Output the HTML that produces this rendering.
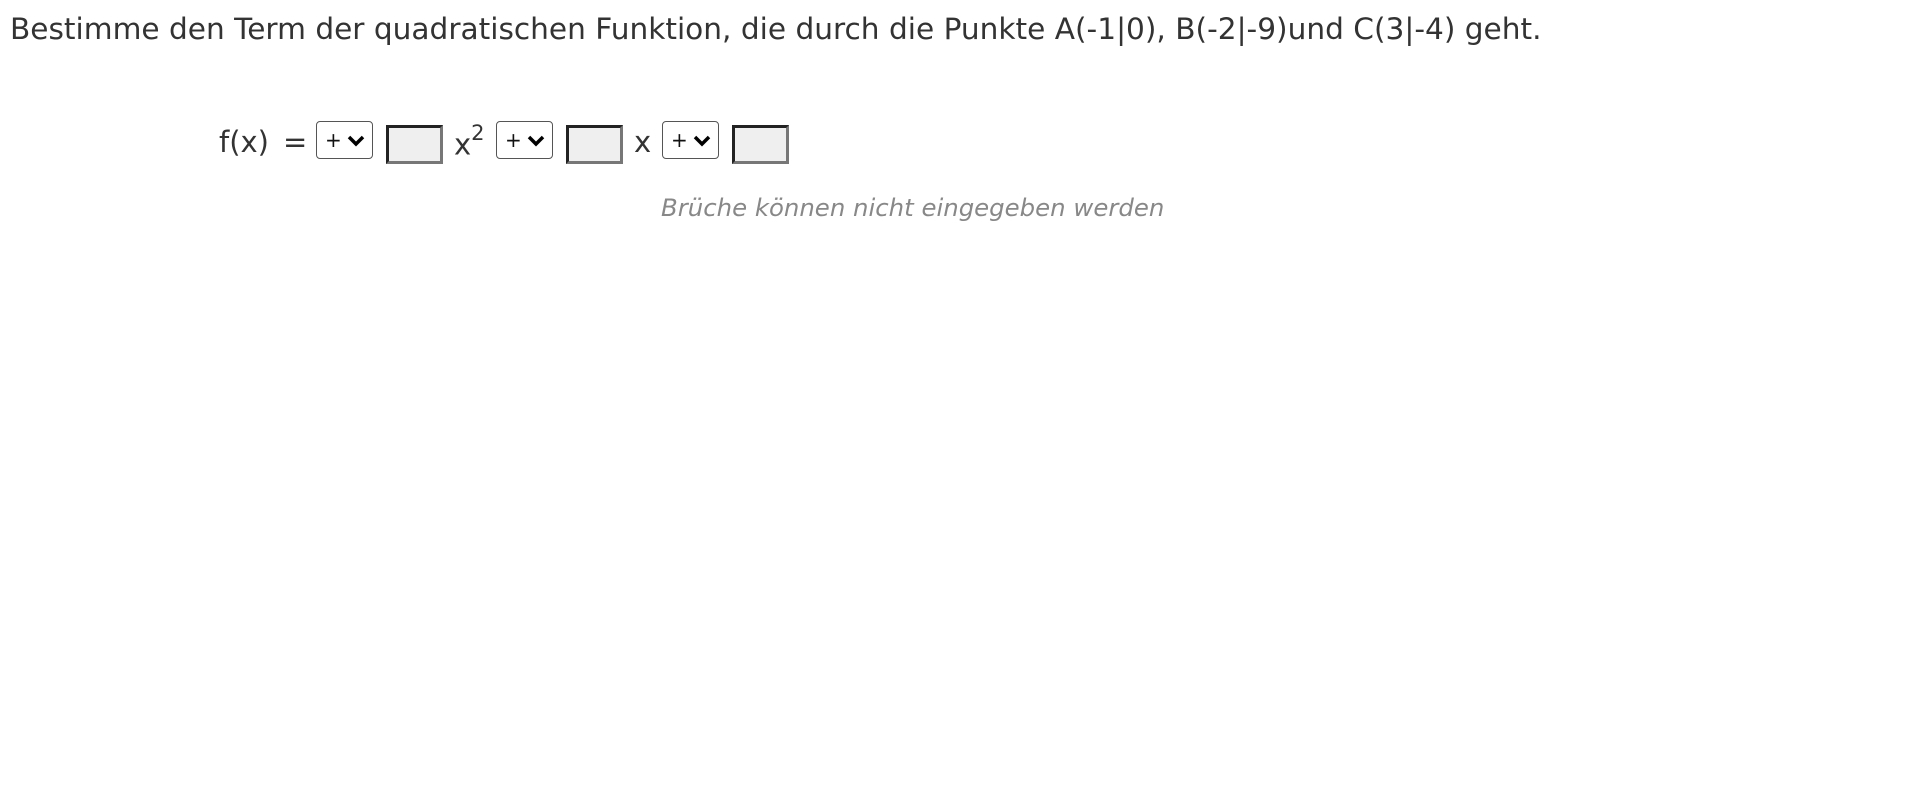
<!DOCTYPE html>
<html><head><meta charset="utf-8"><style>
body{margin:0;background:#fff;width:1920px;height:810px;overflow:hidden;font-family:"DejaVu Sans","Liberation Sans",sans-serif;color:#333;}
.t{position:absolute;left:10px;top:12px;font-size:29.6px;white-space:nowrap;}
.sel{position:absolute;width:57px;height:38px;border:1px solid #555;border-radius:4px;box-sizing:border-box;background:#fff;font-size:20px;color:#111;}
.sel span{position:absolute;left:8px;top:6px;}
.sel svg{position:absolute;left:30px;top:13px;}
.inp{position:absolute;width:57px;height:39px;box-sizing:border-box;border:3px solid;border-color:#222 #777 #777 #222;background:#efefef;}
.m{position:absolute;font-size:29px;color:#333;white-space:nowrap;}
.h{position:absolute;left:661px;top:193px;font-size:24.4px;font-style:italic;color:#888;white-space:nowrap;}
</style></head><body>
<div class="t">Bestimme den Term der quadratischen Funktion, die durch die Punkte A(-1|0), B(-2|-9)und C(3|-4) geht.</div>
<div class="m" style="left:219px;top:125px">f(x)</div>
<div class="m" style="left:283px;top:125px">=</div>
<div class="sel" style="left:316px;top:121px"><span>+</span><svg width="18" height="12"><path d="M2 2 L9 9 L16 2" stroke="#000" stroke-width="3.5" fill="none"/></svg></div>
<div class="inp" style="left:386px;top:125px"></div>
<div class="m" style="left:454px;top:125px">x<sup style="font-size:21px;position:relative;top:-4px">2</sup></div>
<div class="sel" style="left:496px;top:121px"><span>+</span><svg width="18" height="12"><path d="M2 2 L9 9 L16 2" stroke="#000" stroke-width="3.5" fill="none"/></svg></div>
<div class="inp" style="left:566px;top:125px"></div>
<div class="m" style="left:634px;top:125px">x</div>
<div class="sel" style="left:662px;top:121px"><span>+</span><svg width="18" height="12"><path d="M2 2 L9 9 L16 2" stroke="#000" stroke-width="3.5" fill="none"/></svg></div>
<div class="inp" style="left:732px;top:125px"></div>
<div class="h">Brüche können nicht eingegeben werden</div>
</body></html>
